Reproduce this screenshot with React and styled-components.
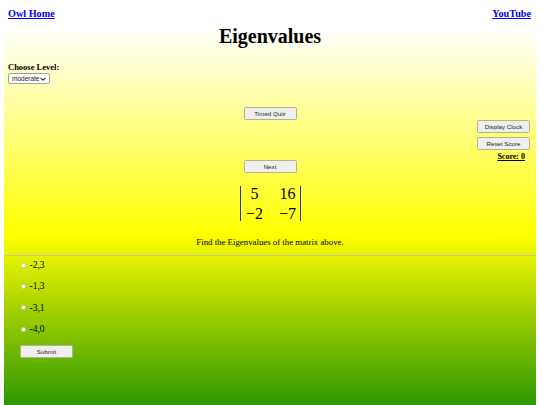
import React from "react";
import styled, { createGlobalStyle } from "styled-components";

const chevron = "data:image/svg+xml," + encodeURIComponent(
  '<svg xmlns="http://www.w3.org/2000/svg" width="6" height="4" viewBox="0 0 6 4"><path d="M.6.8 3 3.2 5.4.8" fill="none" stroke="#333" stroke-width="1.1"/></svg>'
);

const Global = createGlobalStyle`
  html, body { margin: 0; padding: 0; height: 405px; overflow: hidden; background: #fff; }
  body { font-family: "Liberation Serif", serif; color: #000; }
`;
const Page = styled.div`width: 540px; height: 405px; overflow: hidden;`;
const Header = styled.header`
  display: flex; justify-content: space-between; align-items: flex-start;
  height: 27px; padding: 8px 9px 0 8px; box-sizing: border-box;
`;
const HomeLink = styled.a`
  font-size: 10.2px; font-weight: 700; line-height: 12px; color: #0000ee; text-decoration: underline;
`;
const Main = styled.main`
  margin: 0 4px; height: 416px; box-sizing: border-box;
  background: linear-gradient(#ffffff, #ffff00, #008000);
`;
const Title = styled.h1`
  margin: 0; font-size: 20px; line-height: 18px; font-weight: 700; text-align: center;
`;
const LevelBlock = styled.div`
  display: flex; flex-direction: column; align-items: flex-start;
  padding: 16px 0 0 4px; box-sizing: border-box;
`;
const LevelLabel = styled.label`font-size: 8.5px; font-weight: 700; line-height: 12px;`;
const LevelSelect = styled.select`
  appearance: none; width: 42px; height: 11px; padding: 0 0 0 3px; box-sizing: border-box;
  font: 6.5px "Liberation Sans", sans-serif; color: #222;
  background: #fff url("${chevron}") no-repeat right 3px center;
  border: 1px solid #a3a3a3; border-radius: 2px;
`;
const Controls = styled.div`
  display: grid; grid-template-columns: 1fr 53px 1fr; margin-top: 23px; height: 66px;
`;
const CenterStack = styled.div`
  grid-column: 2; display: flex; flex-direction: column; justify-content: space-between; height: 66px;
`;
const SideStack = styled.div`
  grid-column: 3; display: flex; flex-direction: column; align-items: flex-end;
  padding: 13px 6px 0 0; gap: 4px;
`;
const Btn = styled.button`
  width: 53px; height: 13px; padding: 0; box-sizing: border-box;
  font: 6.2px/11px "Liberation Sans", sans-serif; color: #222;
  background: #efefef; border: 1px solid #b4b48c; border-radius: 1.5px;
`;
const Score = styled.a`
  font-size: 8px; font-weight: 700; line-height: 10px; text-decoration: underline;
  margin: -2px 5px 0 0;
`;
const MatrixWrap = styled.div`display: flex; justify-content: center; margin-top: 13px;`;
const Det = styled.div`
  display: grid; grid-template-columns: 18px 20px; column-gap: 14px; align-content: center;
  border-left: 1px solid #333; border-right: 1px solid #333;
  padding: 0 2px 0 5px; height: 35px;
`;
const Cell = styled.span`
  font-size: 16px; line-height: 20px; text-align: center; white-space: nowrap;
`;
const Prompt = styled.p`
  margin: 15px 0 7px; font-size: 8.8px; line-height: 12px; text-align: center;
`;
const Rule = styled.div`
  height: 1px; background: #c6c6a6; flex: none;
`;
const Choices = styled.div`
  display: flex; flex-direction: column; gap: 10.8px; padding: 4px 0 0 17px;
`;
const Choice = styled.label`
  display: flex; align-items: center; gap: 3.5px; font-size: 9.5px; line-height: 10.5px;
`;
const Radio = styled.span`
  width: 5px; height: 5px; border-radius: 50%; background: #fff; border: 0.5px solid #ccc;
  box-sizing: border-box;
`;
const SubmitRow = styled.div`padding: 6px 0 0 16px;`;

export default function App() {
  return (
    <Page>
      <Global />
      <Header>
        <HomeLink href="#">Owl Home</HomeLink>
        <HomeLink href="#">YouTube</HomeLink>
      </Header>
      <Main>
        <Title>Eigenvalues</Title>
        <LevelBlock>
          <LevelLabel>Choose Level:</LevelLabel>
          <LevelSelect defaultValue="moderate">
            <option>moderate</option>
          </LevelSelect>
        </LevelBlock>
        <Controls>
          <CenterStack>
            <Btn>Timed Quiz</Btn>
            <Btn>Next</Btn>
          </CenterStack>
          <SideStack>
            <Btn>Display Clock</Btn>
            <Btn>Reset Score</Btn>
            <Score>Score: 0</Score>
          </SideStack>
        </Controls>
        <MatrixWrap>
          <Det>
            <Cell>5</Cell><Cell>16</Cell>
            <Cell>−2</Cell><Cell>−7</Cell>
          </Det>
        </MatrixWrap>
        <Prompt>Find the Eigenvalues of the matrix above.</Prompt>
        <Rule />
        <Choices>
          {["-2,3", "-1,3", "-3,1", "-4,0"].map((c) => (
            <Choice key={c}><Radio />{c}</Choice>
          ))}
        </Choices>
        <SubmitRow><Btn>Submit</Btn></SubmitRow>
      </Main>
    </Page>
  );
}
